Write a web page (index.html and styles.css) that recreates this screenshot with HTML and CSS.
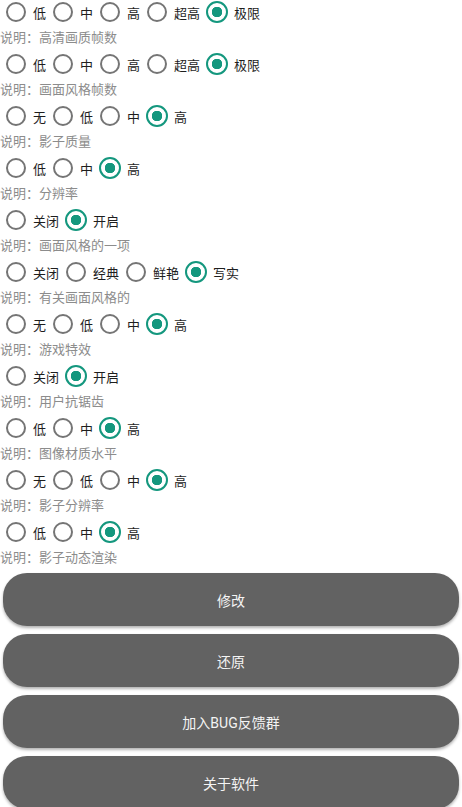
FILE: index.html
```html
<!DOCTYPE html>
<html>
<head>
    <meta charset="utf-8">
    <meta name="viewport" content="width=device-width, initial-scale=1">
    <title>画质设置</title>
    <link rel="stylesheet" href="styles.css">
</head>
<body>
<div class="list">
    <div class="group">
        <label class="opt"><input type="radio" name="g1"><span>低</span></label>
        <label class="opt"><input type="radio" name="g1"><span>中</span></label>
        <label class="opt"><input type="radio" name="g1"><span>高</span></label>
        <label class="opt"><input type="radio" name="g1"><span>超高</span></label>
        <label class="opt"><input type="radio" name="g1" checked><span>极限</span></label>
    </div>
    <p class="desc">说明：高清画质帧数</p>

    <div class="group">
        <label class="opt"><input type="radio" name="g2"><span>低</span></label>
        <label class="opt"><input type="radio" name="g2"><span>中</span></label>
        <label class="opt"><input type="radio" name="g2"><span>高</span></label>
        <label class="opt"><input type="radio" name="g2"><span>超高</span></label>
        <label class="opt"><input type="radio" name="g2" checked><span>极限</span></label>
    </div>
    <p class="desc">说明：画面风格帧数</p>

    <div class="group">
        <label class="opt"><input type="radio" name="g3"><span>无</span></label>
        <label class="opt"><input type="radio" name="g3"><span>低</span></label>
        <label class="opt"><input type="radio" name="g3"><span>中</span></label>
        <label class="opt"><input type="radio" name="g3" checked><span>高</span></label>
    </div>
    <p class="desc">说明：影子质量</p>

    <div class="group">
        <label class="opt"><input type="radio" name="g4"><span>低</span></label>
        <label class="opt"><input type="radio" name="g4"><span>中</span></label>
        <label class="opt"><input type="radio" name="g4" checked><span>高</span></label>
    </div>
    <p class="desc">说明：分辨率</p>

    <div class="group">
        <label class="opt"><input type="radio" name="g5"><span>关闭</span></label>
        <label class="opt"><input type="radio" name="g5" checked><span>开启</span></label>
    </div>
    <p class="desc">说明：画面风格的一项</p>

    <div class="group">
        <label class="opt"><input type="radio" name="g6"><span>关闭</span></label>
        <label class="opt"><input type="radio" name="g6"><span>经典</span></label>
        <label class="opt"><input type="radio" name="g6"><span>鲜艳</span></label>
        <label class="opt"><input type="radio" name="g6" checked><span>写实</span></label>
    </div>
    <p class="desc">说明：有关画面风格的</p>

    <div class="group">
        <label class="opt"><input type="radio" name="g7"><span>无</span></label>
        <label class="opt"><input type="radio" name="g7"><span>低</span></label>
        <label class="opt"><input type="radio" name="g7"><span>中</span></label>
        <label class="opt"><input type="radio" name="g7" checked><span>高</span></label>
    </div>
    <p class="desc">说明：游戏特效</p>

    <div class="group">
        <label class="opt"><input type="radio" name="g8"><span>关闭</span></label>
        <label class="opt"><input type="radio" name="g8" checked><span>开启</span></label>
    </div>
    <p class="desc">说明：用户抗锯齿</p>

    <div class="group">
        <label class="opt"><input type="radio" name="g9"><span>低</span></label>
        <label class="opt"><input type="radio" name="g9"><span>中</span></label>
        <label class="opt"><input type="radio" name="g9" checked><span>高</span></label>
    </div>
    <p class="desc">说明：图像材质水平</p>

    <div class="group">
        <label class="opt"><input type="radio" name="g10"><span>无</span></label>
        <label class="opt"><input type="radio" name="g10"><span>低</span></label>
        <label class="opt"><input type="radio" name="g10"><span>中</span></label>
        <label class="opt"><input type="radio" name="g10" checked><span>高</span></label>
    </div>
    <p class="desc">说明：影子分辨率</p>

    <div class="group">
        <label class="opt"><input type="radio" name="g11"><span>低</span></label>
        <label class="opt"><input type="radio" name="g11"><span>中</span></label>
        <label class="opt"><input type="radio" name="g11" checked><span>高</span></label>
    </div>
    <p class="desc">说明：影子动态渲染</p>
</div>

<div class="actions">
    <button type="button" class="btn">修改</button>
    <button type="button" class="btn">还原</button>
    <button type="button" class="btn">加入BUG反馈群</button>
    <button type="button" class="btn">关于软件</button>
</div>
</body>
</html>
```

FILE: styles.css
```css
body {
    margin: 0;
    background: #fff;
    font-family: Roboto, "Noto Sans CJK SC", sans-serif;
    overflow: hidden;
}

.list {
    margin-top: -4px;
}

.group {
    display: flex;
    align-items: center;
    height: 32px;
    gap: 1px;
}

.opt {
    display: flex;
    align-items: center;
    gap: 7px;
    padding-left: 6px;
    font-size: 13px;
    color: #1e1e1e;
}

.opt input {
    appearance: none;
    -webkit-appearance: none;
    margin: 0;
    width: 20px;
    height: 20px;
    border: 2px solid #757575;
    border-radius: 50%;
    box-sizing: border-box;
}

.opt input:checked {
    width: 22px;
    height: 22px;
    margin: 0 -1px;
    border: 2.5px solid #14977e;
    background: radial-gradient(circle, #14977e 0 5px, transparent 5.5px);
}

.desc {
    margin: 0;
    height: 20px;
    line-height: 20px;
    font-size: 13px;
    color: #8c8c8c;
}

.actions {
    display: flex;
    flex-direction: column;
    gap: 8px;
    margin: 5px 3px 0;
}

.btn {
    height: 53px;
    border: none;
    border-radius: 24px;
    background: #626262;
    color: #f4f4f4;
    font-family: Roboto, "Noto Sans CJK SC", sans-serif;
    font-size: 14px;
    box-shadow: 0 2px 3px rgba(0, 0, 0, 0.3);
}
```
